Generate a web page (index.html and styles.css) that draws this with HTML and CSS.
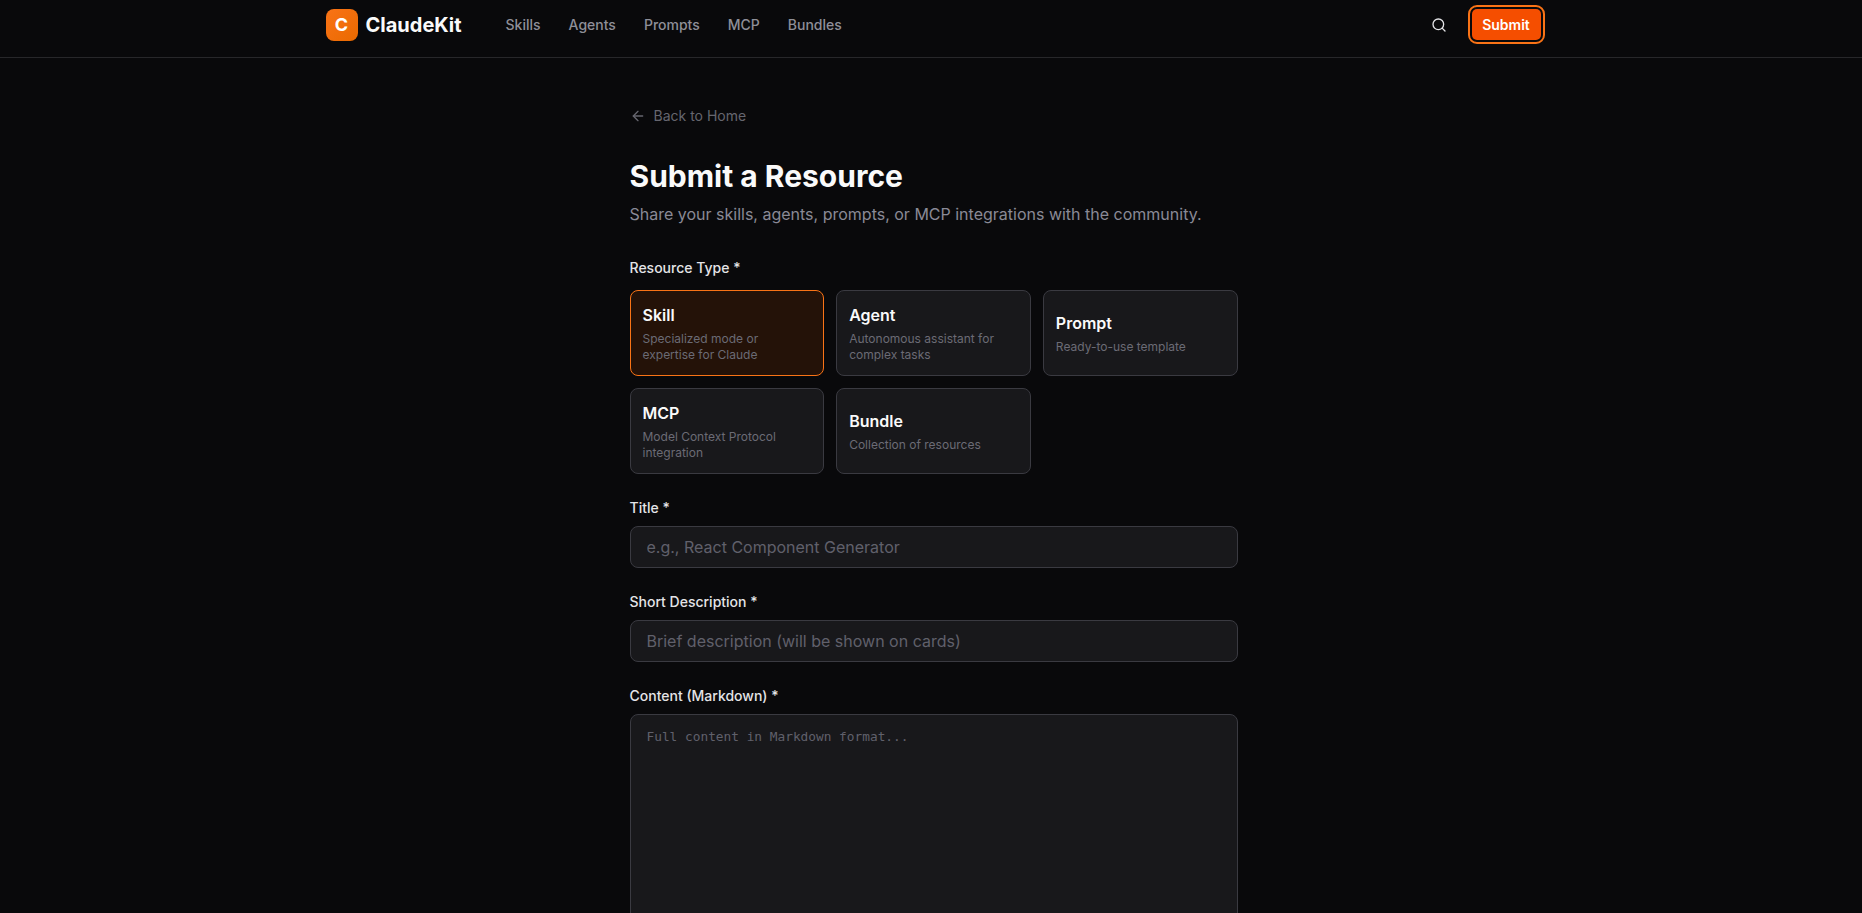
FILE: index.html
```html
<!DOCTYPE html>
<html lang="en">
<head>
<meta charset="utf-8">
<title>Submit a Resource - ClaudeKit</title>
<link rel="stylesheet" href="styles.css">
</head>
<body>
<header class="topbar">
  <div class="topbar-inner">
    <div class="topbar-left">
      <a class="brand" href="#"><span class="brand-mark">C</span><span class="brand-name">ClaudeKit</span></a>
      <nav class="nav">
        <a href="#">Skills</a>
        <a href="#">Agents</a>
        <a href="#">Prompts</a>
        <a href="#">MCP</a>
        <a href="#">Bundles</a>
      </nav>
    </div>
    <div class="topbar-right">
      <button class="icon-btn" type="button" aria-label="Search">
        <svg width="16" height="16" viewBox="0 0 24 24" fill="none" stroke="currentColor" stroke-width="2" stroke-linecap="round" stroke-linejoin="round"><circle cx="11" cy="11" r="8"/><path d="m21 21-4.3-4.3"/></svg>
      </button>
      <button class="submit-btn" type="button">Submit</button>
    </div>
  </div>
</header>
<main class="page">
  <div class="container">
    <a class="back" href="#">
      <svg width="16" height="16" viewBox="0 0 24 24" fill="none" stroke="currentColor" stroke-width="2" stroke-linecap="round" stroke-linejoin="round"><path d="m12 19-7-7 7-7"/><path d="M19 12H5"/></svg>
      <span>Back to Home</span>
    </a>
    <h1>Submit a Resource</h1>
    <p class="lead">Share your skills, agents, prompts, or MCP integrations with the community.</p>
    <form class="form">
      <div class="field field-types">
        <div class="label">Resource Type *</div>
        <div class="types">
          <button class="type active" type="button"><span class="type-name">Skill</span><span class="type-desc">Specialized mode or expertise for Claude</span></button>
          <button class="type" type="button"><span class="type-name">Agent</span><span class="type-desc">Autonomous assistant for complex tasks</span></button>
          <button class="type" type="button"><span class="type-name">Prompt</span><span class="type-desc">Ready-to-use template</span></button>
          <button class="type" type="button"><span class="type-name">MCP</span><span class="type-desc">Model Context Protocol integration</span></button>
          <button class="type" type="button"><span class="type-name">Bundle</span><span class="type-desc">Collection of resources</span></button>
        </div>
      </div>
      <div class="field">
        <label class="label" for="title">Title *</label>
        <input class="input" id="title" type="text" placeholder="e.g., React Component Generator">
      </div>
      <div class="field">
        <label class="label" for="desc">Short Description *</label>
        <input class="input" id="desc" type="text" placeholder="Brief description (will be shown on cards)">
      </div>
      <div class="field">
        <label class="label" for="content">Content (Markdown) *</label>
        <textarea class="input textarea" id="content" placeholder="Full content in Markdown format..."></textarea>
      </div>
    </form>
  </div>
</main>
</body>
</html>
```
FILE: styles.css
```css
* { box-sizing: border-box; }
html, body { margin: 0; padding: 0; }
html { height: 100%; overflow: hidden; }
body {
  height: 100%;
  overflow: hidden;
  background: #09090b;
  color: #fafafa;
  font-family: Inter, "Liberation Sans", sans-serif;
  font-size: 16px;
  line-height: 24px;
}
a { color: inherit; text-decoration: none; }
button { font-family: inherit; cursor: pointer; }

.topbar {
  height: 58px;
  padding-left: 5px;
  border-bottom: 1px solid #27272a;
}
.topbar-inner {
  max-width: 1280px;
  height: 57px;
  margin: 0 auto;
  padding: 0 32px;
  display: flex;
  align-items: center;
  justify-content: space-between;
}
.topbar-left { display: flex; align-items: center; gap: 44px; padding-bottom: 7px; }
.brand { display: flex; align-items: center; gap: 8px; }
.brand-mark {
  width: 32px;
  height: 32px;
  border-radius: 8px;
  background: linear-gradient(135deg, #f97316, #ea6a00);
  color: #fff;
  font-size: 18px;
  font-weight: 700;
  display: flex;
  align-items: center;
  justify-content: center;
}
.brand-name { font-size: 20px; font-weight: 700; color: #fafafa; }
.nav { display: flex; gap: 28px; font-size: 14px; font-weight: 500; line-height: 20px; color: #8f8f98; }
.topbar-right { display: flex; align-items: center; gap: 23px; padding: 0 1px 8px 0; }
.icon-btn {
  width: 20px;
  height: 20px;
  padding: 2px;
  border: 0;
  background: none;
  color: #e4e4e7;
  display: flex;
}
.submit-btn {
  width: 69px;
  height: 31px;
  padding: 0;
  border: 0;
  border-radius: 5px;
  background: #f54e00;
  color: #fff;
  font-size: 14px;
  font-weight: 600;
  outline: 2px solid #f97316;
  outline-offset: 2px;
}

.page { padding-left: 5px; }
.container { max-width: 672px; margin: 0 auto; padding: 48px 32px 0; }
.back { display: flex; align-items: center; gap: 8px; height: 20px; margin-bottom: 32px; font-size: 14px; line-height: 20px; color: #66666f; }
h1 { margin: 0 0 8px; font-size: 30px; line-height: 36px; font-weight: 700; color: #fafafa; }
.lead { margin: 0; font-size: 16px; line-height: 24px; color: #8a8a96; }
.form { display: flex; flex-direction: column; gap: 24px; margin-top: 32px; }
.field { display: flex; flex-direction: column; gap: 8px; }
.field-types { gap: 12px; }
.label { display: block; font-size: 14px; line-height: 20px; font-weight: 500; color: #e4e4e7; }
.types { display: grid; grid-template-columns: repeat(3, 1fr); gap: 12px; }
.type {
  height: 86px;
  padding: 12px;
  border: 1px solid #3a3a41;
  border-radius: 8px;
  background: #18181b;
  text-align: left;
  display: flex;
  flex-direction: column;
  justify-content: center;
  gap: 4px;
}
.type.active { border-color: #f97316; background: #241208; }
.type-name { font-size: 16px; line-height: 24px; font-weight: 600; color: #fafafa; }
.type-desc { font-size: 12px; line-height: 16px; color: #6b6b75; }
.input {
  display: block;
  width: 100%;
  height: 42px;
  padding: 8px 16px;
  border: 1px solid #3a3a41;
  border-radius: 8px;
  background: #18181b;
  color: #fafafa;
  font-family: inherit;
  font-size: 16px;
  outline: none;
}
.input::placeholder { color: #60606b; opacity: 1; }
.textarea {
  height: 400px;
  padding: 12px 16px;
  font-family: "DejaVu Sans Mono", monospace;
  font-size: 12.8px;
  line-height: 20px;
  resize: none;
}
```
